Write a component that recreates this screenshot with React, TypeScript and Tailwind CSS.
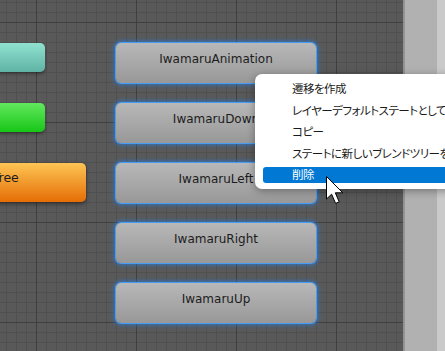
const states = ["IwamaruAnimation", "IwamaruDown", "IwamaruLeft", "IwamaruRight", "IwamaruUp"];

const menuItems = [
  "遷移を作成",
  "レイヤーデフォルトステートとして設定",
  "コピー",
  "ステートに新しいブレンドツリーを作成",
  "削除",
];

function StateNode({ name }: { name: string }) {
  return (
    <div className="w-[200px] h-[40px] rounded-[5px] bg-[linear-gradient(to_bottom,#b8b8b8,#989898)] shadow-[0_0_0_1px_#4a9cf0,0_0_4px_2px_rgba(40,125,225,0.75)] flex items-center justify-center pb-[9px] text-[12px] text-[#1c1c1c]">
      {name}
    </div>
  );
}

function Cursor() {
  return (
    <svg className="absolute z-20 left-[326px] top-[176px]" width="19" height="29" viewBox="0 0 19 29">
      <path
        d="M0.5 0.5 V23 L5.6 18.2 L9.6 27.4 L13.2 25.8 L9.3 16.8 H16.8 Z"
        fill="#ffffff"
        stroke="#000000"
        strokeWidth="1"
        strokeLinejoin="miter"
      />
    </svg>
  );
}

export default function App() {
  return (
    <div className="relative w-[445px] h-[351px] overflow-hidden flex font-['DejaVu_Sans',sans-serif]">
      {/* graph canvas */}
      <div className="relative w-[403px] shrink-0 h-full bg-[#595959] [background-image:linear-gradient(to_right,#3f3f3f_1px,transparent_1px),linear-gradient(to_bottom,#3f3f3f_1px,transparent_1px),linear-gradient(to_right,#505050_1px,transparent_1px),linear-gradient(to_bottom,#505050_1px,transparent_1px)] [background-size:100px_100px,100px_100px,10px_10px,10px_10px] [background-position:36px_22px,36px_22px,6px_2px,6px_2px]">
        {/* entry / any state / blend tree column */}
        <div className="absolute left-[-114px] top-[43px] flex flex-col items-start gap-[31px]">
          <div className="w-[159px] h-[29px] rounded-[5px] bg-[linear-gradient(to_bottom,#90e2cf,#5fb3a5)] shadow-[0_2px_3px_rgba(0,0,0,0.35)]" />
          <div className="w-[159px] h-[29px] rounded-[5px] bg-[linear-gradient(to_bottom,#62e85e,#17c617)] shadow-[0_2px_3px_rgba(0,0,0,0.35)]" />
          <div className="w-[200px] h-[39px] rounded-[5px] bg-[linear-gradient(to_bottom,#fdc554,#e56d05)] shadow-[0_2px_4px_rgba(0,0,0,0.45)] flex items-center justify-center pb-[9px] text-[12.5px] text-[#1c1c1c]">
            Blend Tree
          </div>
        </div>
        {/* state column */}
        <div className="absolute left-[116px] top-[43px] flex flex-col gap-[20px]">
          {states.map((s) => (
            <StateNode key={s} name={s} />
          ))}
        </div>
      </div>
      <div className="w-[2px] shrink-0 h-full bg-[#939393]" />
      <div className="w-[32px] shrink-0 h-full bg-[#b1b1b1]" />
      <div className="flex-1 h-full bg-[#cacaca]" />

      {/* context menu */}
      <div className="absolute z-10 left-[255px] top-[74px] w-[230px] rounded-[7px] bg-white shadow-[0_2px_8px_rgba(0,0,0,0.35)] pt-[4px] pb-[3px] font-['Noto_Sans_CJK_JP',sans-serif] [font-feature-settings:'palt'] text-[11.5px] tracking-[-0.5px] text-[#1a1a1a] whitespace-nowrap">
        {menuItems.map((m, i) => (
          <div key={m} className="h-[21.5px] flex items-center px-[8px]">
            <div
              className={
                i === 4
                  ? "w-full h-[16px] rounded-[3px] bg-[#0078d4] text-white flex items-center pl-[29px]"
                  : "w-full flex items-center pl-[29px]"
              }
            >
              {m}
            </div>
          </div>
        ))}
      </div>
      <Cursor />
    </div>
  );
}
